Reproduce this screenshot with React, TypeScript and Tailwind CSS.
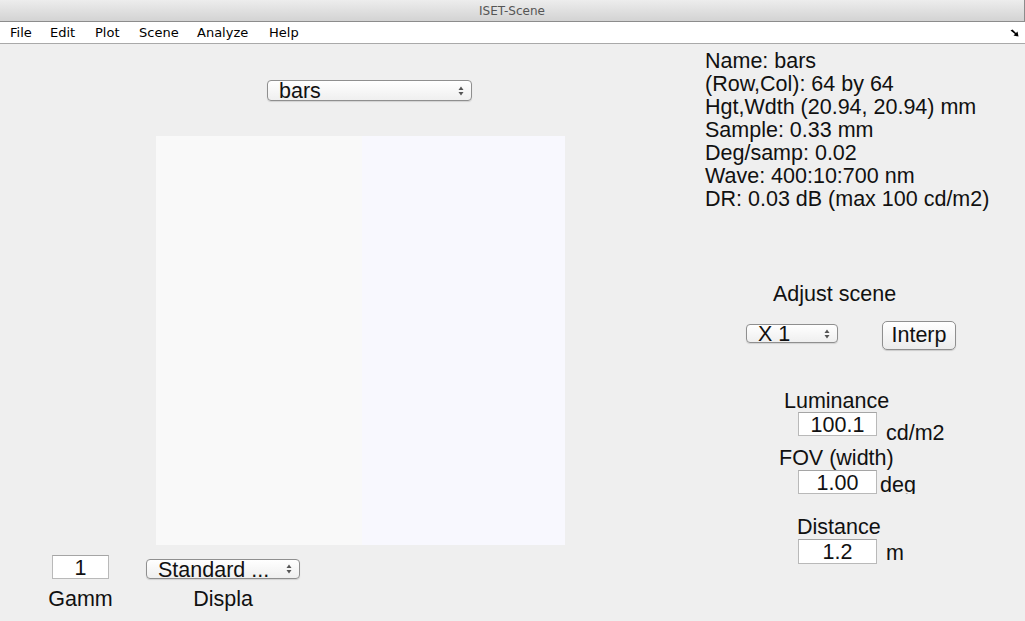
import React from "react";

const SANS = "font-['Liberation_Sans',Arial,sans-serif]";

function Arrows() {
  return (
    <svg width="6" height="10" viewBox="0 0 6 10" className="shrink-0">
      <path d="M3 0.5 L5.5 4 L0.5 4 Z" fill="#555" />
      <path d="M3 9.5 L5.5 6 L0.5 6 Z" fill="#555" />
    </svg>
  );
}

function Popup({
  label,
  className,
  leading,
}: {
  label: string;
  className: string;
  leading: string;
}) {
  return (
    <div
      className={`flex items-start justify-between rounded-[4px] border border-[#8f8f8f] bg-gradient-to-b from-white to-[#efefef] shadow-[0_1px_1px_rgba(0,0,0,0.12)] pl-[11px] pr-[7px] ${className}`}
    >
      <span className={`whitespace-nowrap ${leading}`}>{label}</span>
      <div className="self-center">
        <Arrows />
      </div>
    </div>
  );
}

function Field({ value, className }: { value: string; className: string }) {
  return (
    <div
      className={`bg-white border border-[#b9b9b9] border-t-[#a5a5a5] text-center leading-[24px] ${className}`}
    >
      {value}
    </div>
  );
}

export default function App() {
  const info = [
    "Name: bars",
    "(Row,Col): 64 by 64",
    "Hgt,Wdth (20.94, 20.94) mm",
    "Sample: 0.33 mm",
    "Deg/samp: 0.02",
    "Wave: 400:10:700 nm",
    "DR: 0.03 dB (max 100 cd/m2)",
  ];
  const menus = [
    { name: "File", w: "w-[40px]" },
    { name: "Edit", w: "w-[45px]" },
    { name: "Plot", w: "w-[44px]" },
    { name: "Scene", w: "w-[58px]" },
    { name: "Analyze", w: "w-[72px]" },
    { name: "Help", w: "w-[40px]" },
  ];

  return (
    <div className={`w-[1025px] h-[621px] overflow-hidden bg-[#efefef] text-[#111] ${SANS}`}>
      {/* Title bar */}
      <div className="h-[22px] flex items-center justify-center bg-gradient-to-b from-[#ededed] to-[#d3d3d3] border-b border-r border-[#8c8c8c] font-['DejaVu_Sans',sans-serif] text-[12px] text-[#555]">
        ISET-Scene
      </div>

      {/* Menu bar */}
      <div className="h-[22px] flex items-center bg-white border-b border-[#a9a9a9] pl-[10px] pr-[5px] font-['DejaVu_Sans',sans-serif] text-[13px] text-black">
        {menus.map((m) => (
          <span key={m.name} className={m.w}>
            {m.name}
          </span>
        ))}
        <div className="ml-auto mr-[1px]">
          <svg width="9" height="8" viewBox="0 0 9 8">
            <path d="M0.5 1.5 L2.5 0.5 L6 4 L7.5 2.5 L8.5 7.5 L3.5 6.5 L5 5 Z" fill="#000" />
          </svg>
        </div>
      </div>

      {/* Body */}
      <div className="flex text-[21.5px]">
        {/* Left column */}
        <div className="w-[705px] flex flex-col">
          <Popup
            label="bars"
            leading="leading-[20px]"
            className="mt-[36px] ml-[267px] w-[205px] h-[21px]"
          />
          <div className="mt-[35px] ml-[156px] w-[409px] h-[409px] flex">
            <div className="w-[206px] h-full bg-[#f9f9f9]" />
            <div className="flex-1 h-full bg-[#f8f8fe]" />
          </div>
          <div className="flex items-start">
            <div className="ml-[52px] w-[57px] flex flex-col items-center">
              <Field value="1" className="mt-[10px] w-[57px] h-[24px]" />
              <span className="mt-[9px] leading-[23px] whitespace-nowrap">Gamm</span>
            </div>
            <div className="ml-[37px] w-[154px] flex flex-col items-center">
              <Popup
                label="Standard ..."
                leading="leading-[21px]"
                className="mt-[14px] w-[154px] h-[20px]"
              />
              <span className="mt-[9px] leading-[23px] whitespace-nowrap">Displa</span>
            </div>
          </div>
        </div>

        {/* Right column */}
        <div className="flex-1 flex flex-col">
          <div className="pt-[6px] leading-[23px]">
            {info.map((line) => (
              <div key={line} className="whitespace-nowrap">
                {line}
              </div>
            ))}
          </div>

          <div className="mt-[72px] ml-[68px] leading-[23px]">Adjust scene</div>

          <div className="mt-[15px] flex items-start">
            <Popup
              label="X 1"
              leading="leading-[19px]"
              className="mt-[3px] ml-[41px] w-[92px] h-[19px]"
            />
            <div className="ml-[44px] w-[74px] h-[29px] rounded-[5px] border border-[#8f8f8f] bg-gradient-to-b from-white to-[#ececec] shadow-[0_1px_1px_rgba(0,0,0,0.15)] text-center pt-[2px] leading-[23px]">
              Interp
            </div>
          </div>

          <div className="mt-[40px] ml-[79px] leading-[23px]">Luminance</div>
          <div className="-mt-[1px] flex items-start">
            <Field value="100.1" className="ml-[93px] w-[79px] h-[24px]" />
            <span className="ml-[9px] mt-[10px] leading-[23px]">cd/m2</span>
          </div>

          <div className="mt-[2px] ml-[74px] leading-[23px] whitespace-nowrap">FOV (width)</div>
          <div className="flex items-start">
            <Field value="1.00" className="ml-[93px] w-[79px] h-[24px]" />
            <span className="ml-[3px] mt-[4px] h-[20px] overflow-hidden leading-[23px]">deg</span>
          </div>

          <div className="mt-[22px] ml-[92px] leading-[23px]">Distance</div>
          <div className="flex items-start">
            <Field value="1.2" className="ml-[93px] w-[79px] h-[25px]" />
            <span className="ml-[9px] mt-[3px] leading-[23px]">m</span>
          </div>
        </div>
      </div>
    </div>
  );
}
